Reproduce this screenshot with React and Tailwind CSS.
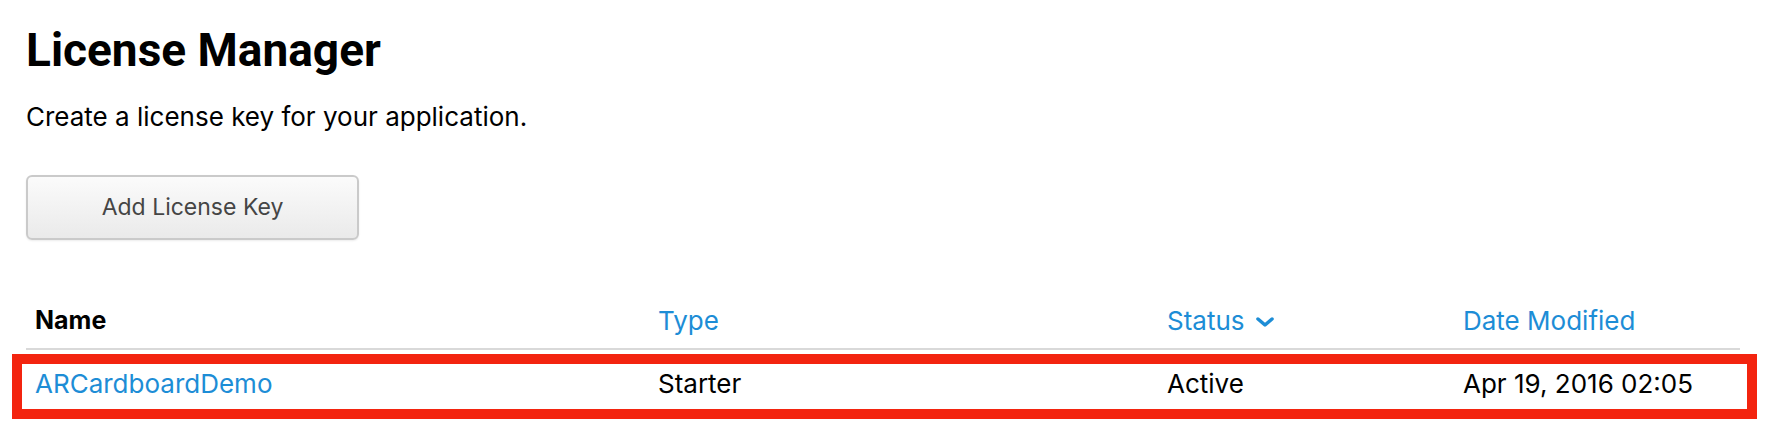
import React from "react";

const cols = "grid grid-cols-[623px_509px_296px_1fr]";

const StatusChevron = () => (
  <svg width="18" height="10" viewBox="0 0 18 10" className="ml-[11px] mt-[2px]">
    <polyline points="2,2 9,8 16,2" fill="none" stroke="#1d8dd6" strokeWidth="3.5" strokeLinecap="round" strokeLinejoin="round" />
  </svg>
);

const App = () => {
  return (
    <div className="min-h-screen bg-white text-black font-['Inter',sans-serif] pl-[26px] pt-[27px]">
      <h1 className="font-['Roboto',sans-serif] text-[46px] leading-none font-bold">License Manager</h1>
      <p className="mt-[31px] text-[26px] leading-none">Create a license key for your application.</p>

      <button className="mt-[45px] w-[333px] h-[65px] rounded-[6px] border-2 border-[#cacaca] bg-gradient-to-b from-[#fbfbfb] to-[#eaeaea] text-[23px] text-[#454545] shadow-[0_1px_2px_rgba(0,0,0,0.08)]">
        Add License Key
      </button>

      {/* Table */}
      <div className="mt-[68px] w-[1714px] leading-none">
        <div className={`${cols} pb-[14px] border-b-2 border-[#d9d9d9] text-[26px]`}>
          <div className="pl-[9px] font-bold text-[25px]">Name</div>
          <div className="pl-[9px] text-[#1d8dd6]">Type</div>
          <div className="pl-[9px] text-[#1d8dd6] flex items-center">
            Status
            <StatusChevron />
          </div>
          <div className="pl-[9px] text-[#1d8dd6]">Date Modified</div>
        </div>

        {/* highlighted row */}
        <div className={`${cols} mt-[4px] -ml-[14px] w-[1745px] h-[65px] border-[10px] border-[#f3240f] pt-[7px] text-[26px]`}>
          <div className="pl-[13px] text-[#1d8dd6]">ARCardboardDemo</div>
          <div className="pl-[13px]">Starter</div>
          <div className="pl-[13px]">Active</div>
          <div className="pl-[13px]">Apr 19, 2016 02:05</div>
        </div>
      </div>
    </div>
  );
};

export default App;
